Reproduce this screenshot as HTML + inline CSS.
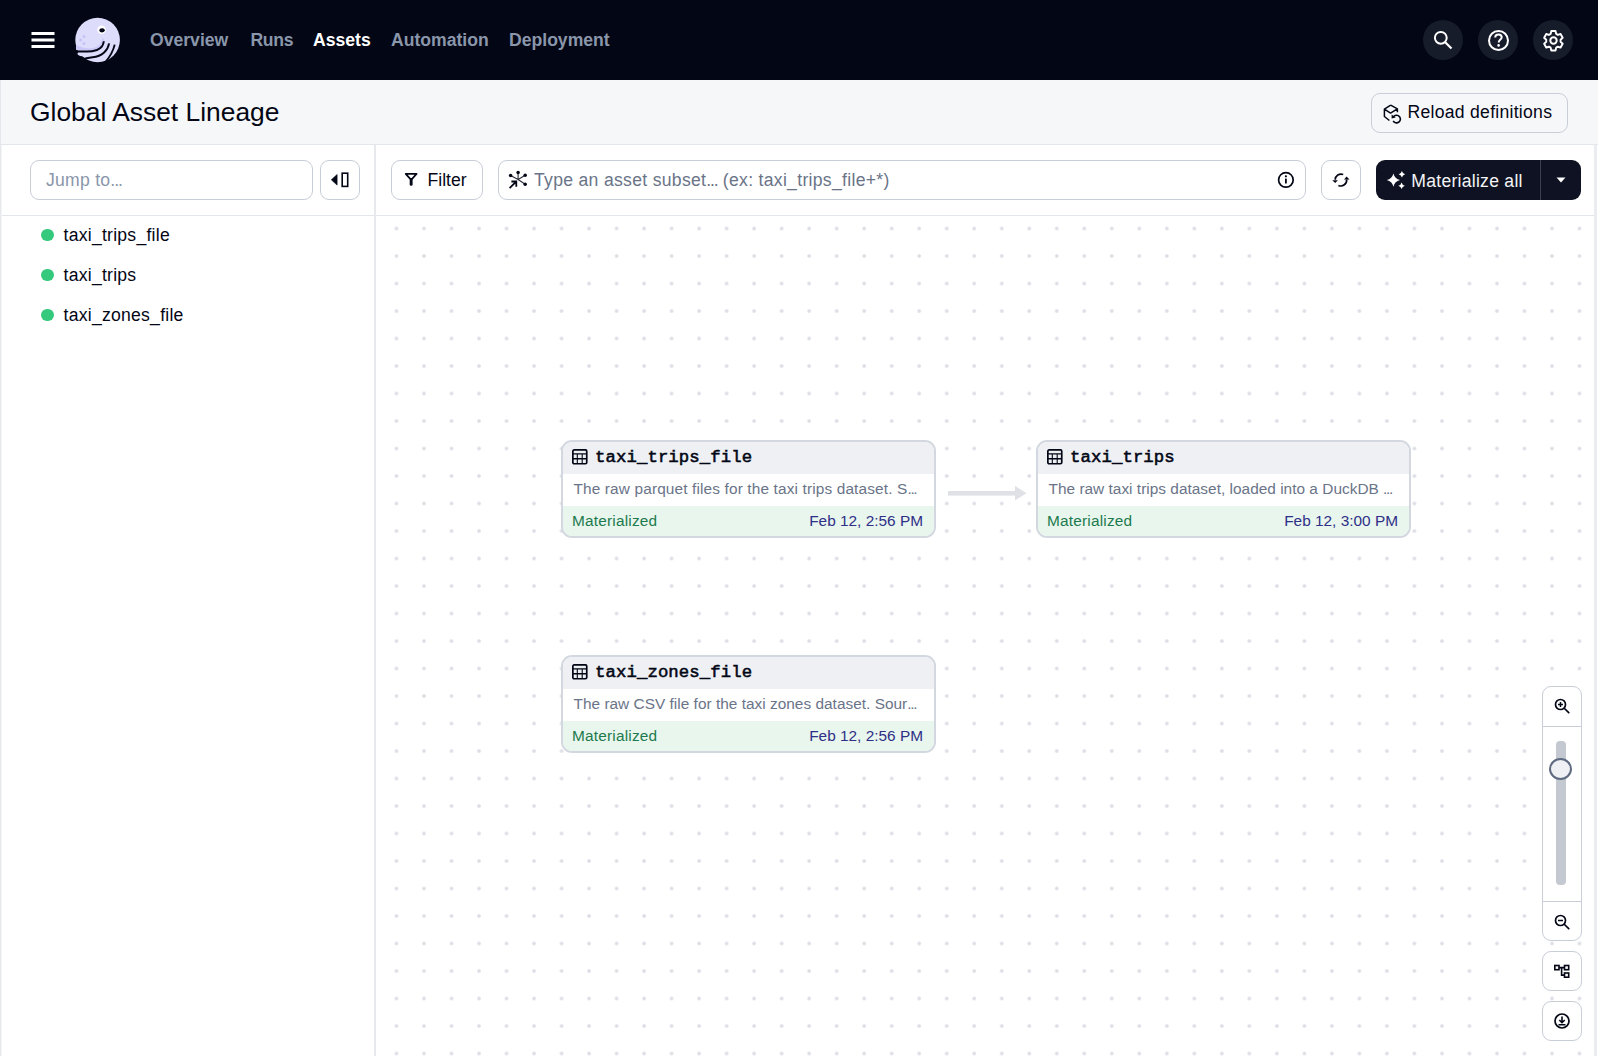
<!DOCTYPE html>
<html><head><meta charset="utf-8">
<style>
*{box-sizing:border-box;margin:0;padding:0}
html,body{width:1598px;height:1056px;overflow:hidden;background:#fff;font-family:"Liberation Sans",sans-serif;color:#030615}
.abs{position:absolute}
#nav{position:absolute;left:0;top:0;width:1598px;height:80px;background:#030615}
.navtxt{position:absolute;top:29px;font-size:17.6px;font-weight:700;color:#8a96aa;white-space:nowrap;line-height:22px}
.navbtn{position:absolute;top:20px;width:40px;height:40px;border-radius:20px;background:#171c2b}
#ph{position:absolute;left:0;top:80px;width:1598px;height:65px;background:#f6f7f9;border-bottom:1px solid #e3e6eb;border-left:1px solid #e3e6eb}
.btn{position:absolute;border:1px solid #c8cdd7;border-radius:9px;background:#fff}
.txt{position:absolute;white-space:nowrap}
#side{position:absolute;left:0;top:145px;width:376px;height:911px;border-right:2px solid #e8e9ed;border-left:1px solid #e6e8eb;background:#fff}
.node{position:absolute;width:375px;height:98px;border:2px solid #d3d7df;border-radius:11px;overflow:hidden;background:#fff}
.nh{position:absolute;left:0;top:0;right:0;height:32px;background:#eef0f3}
.nd{position:absolute;left:0;top:32px;right:0;height:32px;background:#fff}
.ns{position:absolute;left:0;top:64px;right:0;bottom:0;background:#e8f6ee}
.ntitle{position:absolute;left:32px;top:5px;letter-spacing:0.1px;font-family:"Liberation Mono",monospace;font-weight:400;-webkit-text-stroke:0.55px #030615;font-size:17.31px;line-height:22px;color:#030615;white-space:nowrap}
.ndesc{position:absolute;left:9.5px;top:5px;letter-spacing:0.14px;font-size:15.4px;line-height:20px;color:#6a7488;white-space:nowrap}
.nmat{position:absolute;left:9px;top:4.5px;letter-spacing:0.2px;font-size:15.4px;line-height:20px;color:#1d7a4d;white-space:nowrap}
.ndate{position:absolute;right:11px;top:4.5px;font-size:15.4px;line-height:20px;color:#2f2f87;white-space:nowrap}
.item{position:absolute;left:63.5px;font-size:17.6px;line-height:22px;color:#030615;white-space:nowrap;letter-spacing:0.25px}
.gdot{position:absolute;left:41.2px;width:12.6px;height:12.6px;border-radius:50%;background:#34c97d}
.zbtn{position:absolute;left:1542px;width:40px;height:40px;border:1px solid #c8cdd7;border-radius:9px;background:#fff}
.ell{letter-spacing:-1.1px}
.ell2{letter-spacing:-1.3px}
</style></head>
<body>
<!-- NAV -->
<div id="nav">
  <svg class="abs" style="left:31px;top:31px" width="24" height="18" viewBox="0 0 24 18">
    <rect x="0.5" y="1" width="23" height="3" fill="#fff"/>
    <rect x="0.5" y="7.5" width="23" height="3" fill="#fff"/>
    <rect x="0.5" y="14" width="23" height="3" fill="#fff"/>
  </svg>
  <svg class="abs" style="left:72px;top:15px" width="52" height="52" viewBox="0 0 52 52">
    <circle cx="25.6" cy="25" r="22.3" fill="#dedcfb"/>
    <path d="M30.5 22.5 C30 29, 26 32.8, 18.5 33.2 C12 33.4 7.5 32 4 29.5 L4 34.8 C8 37.2 13 37.6 19 37.5 C27 37.2 31.8 33 32.8 26 Z" fill="#ccc7f7"/>
    <path d="M10.5 39.6 Q8.5 39.5 7.2 38.6" stroke="#dedcfb" stroke-width="3.4" stroke-linecap="round" fill="none"/>
    <path d="M31.8 26.2 C31.4 31.5 27 35.8 20 36.2 C14 36.6 8 37 2.5 36" stroke="#030615" stroke-width="1.9" fill="none"/>
    <path d="M37.1 28.4 C36 35 30.5 41.6 20.5 42.2 C16 42.6 12 43.8 7.5 45.5" stroke="#030615" stroke-width="1.9" fill="none"/>
    <path d="M42.7 29.6 C41.2 36 38.5 41 33.5 47" stroke="#030615" stroke-width="1.9" fill="none"/>
    <circle cx="29.6" cy="14.8" r="4.3" fill="#fff"/>
    <ellipse cx="30.1" cy="15.3" rx="2.7" ry="2.1" fill="#030615"/>
    <circle cx="12" cy="21.5" r="1.5" fill="#c6c1f5"/>
    <circle cx="8.6" cy="25" r="1.5" fill="#c6c1f5"/>
    <circle cx="12" cy="28.6" r="1.5" fill="#c6c1f5"/>
  </svg>
  <div class="navtxt" style="left:150px">Overview</div>
  <div class="navtxt" style="left:250.5px;letter-spacing:-0.35px">Runs</div>
  <div class="navtxt" style="left:313px;color:#fff">Assets</div>
  <div class="navtxt" style="left:391px">Automation</div>
  <div class="navtxt" style="left:509px">Deployment</div>
  <div class="navbtn" style="left:1423px">
    <svg class="abs" style="left:0;top:0" width="40" height="40" viewBox="0 0 40 40">
      <circle cx="17.8" cy="17.8" r="5.9" stroke="#fff" stroke-width="2" fill="none"/>
      <path d="M22 22 L28.5 28.5" stroke="#fff" stroke-width="2.2"/>
    </svg>
  </div>
  <div class="navbtn" style="left:1478px">
    <svg class="abs" style="left:0;top:0" width="40" height="40" viewBox="0 0 40 40">
      <circle cx="20.5" cy="20.5" r="9.5" stroke="#fff" stroke-width="2" fill="none"/>
      <path d="M17.2 17.6 C17.2 15.6 18.6 14.4 20.5 14.4 C22.4 14.4 23.7 15.6 23.7 17.3 C23.7 19.6 20.9 19.6 20.7 22.5" stroke="#fff" stroke-width="2" fill="none"/>
      <circle cx="20.6" cy="25.4" r="1.3" fill="#fff"/>
    </svg>
  </div>
  <div class="navbtn" style="left:1533px">
    <svg class="abs" style="left:0;top:0" width="40" height="40" viewBox="0 0 40 40">
      <path transform="translate(20.6,0) scale(0.955,1) translate(-20,0)" d="M17.6 11 h4.4 l0.7 2.9 l1.8 1 l2.8 -0.9 l2.2 3.8 l-2.2 2 v2 l2.2 2 l-2.2 3.8 l-2.8 -0.9 l-1.8 1 l-0.7 2.9 h-4.4 l-0.7 -2.9 l-1.8 -1 l-2.8 0.9 l-2.2 -3.8 l2.2 -2 v-2 l-2.2 -2 l2.2 -3.8 l2.8 0.9 l1.8 -1 z" stroke="#fff" stroke-width="2" fill="none" stroke-linejoin="round"/>
      <circle cx="20.5" cy="20.5" r="3.2" stroke="#fff" stroke-width="2" fill="none"/>
    </svg>
  </div>
</div>

<!-- PAGE HEADER -->
<div id="ph">
  <div class="txt" style="left:29px;top:16px;font-size:26.4px;line-height:32px;color:#030615">Global Asset Lineage</div>
</div>
<div class="btn" style="left:1371px;top:93px;width:197px;height:40px;background:#f6f7f9">
  <svg class="abs" style="left:11px;top:10px" width="22" height="22" viewBox="0 0 22 22">
    <path d="M7.7 1.2 L14.4 4.8 V8.3 M7.7 1.2 L1.4 5.1 V12.5 L6.4 16.5 M1.4 5.1 L7.5 9.1 L14.4 4.8" stroke="#030615" stroke-width="1.5" fill="none" stroke-linejoin="round"/>
    <path d="M10.2 16.8 A3.8 3.8 0 1 0 10.9 12.4" stroke="#030615" stroke-width="1.6" fill="none"/>
    <path d="M8.6 10.6 L12.6 13.6 L8.6 14.6 Z" fill="#030615"/>
  </svg>
  <div class="txt" style="left:35.5px;top:7.3px;font-size:17.6px;line-height:22px;letter-spacing:0.27px;color:#030615">Reload definitions</div>
</div>

<!-- SIDEBAR -->
<div id="side">
  <div class="abs" style="left:0;top:70px;width:374px;height:1px;background:#e3e6eb"></div>
</div>
<div class="btn" style="left:30px;top:160px;width:283px;height:40px">
  <div class="txt" style="left:15px;top:8px;font-size:17.6px;line-height:22px;letter-spacing:0.25px;color:#8a96aa">Jump to<span class="ell">...</span></div>
</div>
<div class="btn" style="left:320px;top:160px;width:40px;height:40px">
  <svg class="abs" style="left:0;top:0" width="38" height="38" viewBox="0 0 38 38">
    <path d="M10.3 18.8 L16.1 13.5 V24.1 Z" fill="#030615" stroke="#030615" stroke-width="0.6" stroke-linejoin="round"/>
    <rect x="21.2" y="12.2" width="5.5" height="13.2" stroke="#030615" stroke-width="1.6" fill="none"/>
  </svg>
</div>
<div class="gdot" style="top:228.7px"></div>
<div class="item" style="top:224px">taxi_trips_file</div>
<div class="gdot" style="top:268.7px"></div>
<div class="item" style="top:264px">taxi_trips</div>
<div class="gdot" style="top:308.7px"></div>
<div class="item" style="top:304px">taxi_zones_file</div>

<!-- GRAPH AREA -->
<div class="abs" style="left:376px;top:145px;width:1218px;height:71px;border-bottom:1px solid #e3e6eb;background:#fff"></div>
<svg class="abs" style="left:376px;top:216px" width="1218" height="840">
  <defs>
    <pattern id="dots" x="-7.11" y="-15.11" width="27.512" height="27.5" patternUnits="userSpaceOnUse">
      <circle cx="27.6" cy="27.6" r="1.85" fill="#dcdee5"/>
      <circle cx="0.1" cy="0.1" r="1.85" fill="#dcdee5"/>
      <circle cx="27.6" cy="0.1" r="1.85" fill="#dcdee5"/>
      <circle cx="0.1" cy="27.6" r="1.85" fill="#dcdee5"/>
    </pattern>
  </defs>
  <rect x="0" y="0" width="1218" height="840" fill="url(#dots)"/>
  <!-- arrow -->
  <rect x="572" y="275" width="68" height="4.6" fill="#dfe1e6"/>
  <path d="M639 269.8 L650.5 277.3 L639 284.4 Z" fill="#dfe1e6"/>
</svg>
<div class="abs" style="left:1594px;top:145px;width:3px;height:911px;background:#eaecef"></div>

<!-- toolbar -->
<div class="btn" style="left:391px;top:160px;width:92px;height:40px">
  <svg class="abs" style="left:12px;top:11px" width="16" height="16" viewBox="0 0 16 16">
    <path d="M1.7 1.9 H12.6 L7.15 7.8 Z" stroke="#030615" stroke-width="1.7" fill="none" stroke-linejoin="round"/><path d="M7.15 8 V12.4" stroke="#030615" stroke-width="2.9" stroke-linecap="round"/>
  </svg>
  <div class="txt" style="left:35.5px;top:8px;font-size:17.6px;line-height:22px;color:#030615">Filter</div>
</div>
<div class="btn" style="left:498px;top:160px;width:808px;height:40px">
  <svg class="abs" style="left:5px;top:5px" width="28" height="28" viewBox="0 0 28 28">
    <path d="M14.1 13.5 V6.5 M14.1 13.5 L6.6 9.4 M14.1 13.5 L21.2 9.3 M14.1 13.5 L21.2 18.3" stroke="#030615" stroke-width="1.1" fill="none" opacity="0.85"/>
    <circle cx="14.1" cy="6.5" r="1.75" fill="#030615"/><circle cx="6.6" cy="9.4" r="1.75" fill="#030615"/><circle cx="21.2" cy="9.3" r="1.75" fill="#030615"/><circle cx="21.2" cy="18.3" r="1.75" fill="#030615"/>
    <path d="M5.6 22.1 L11.9 15.9 M7.4 15.5 H12.3 V20.7" stroke="#030615" stroke-width="1.8" fill="none"/>
  </svg>
  <div class="txt" style="left:35px;top:8px;font-size:17.6px;line-height:22px;letter-spacing:0.3px;color:#6a7488">Type an asset subset<span class="ell">...</span> (ex: taxi_trips_file+*)</div>
  <svg class="abs" style="left:778px;top:10px" width="18" height="18" viewBox="0 0 18 18">
    <circle cx="8.9" cy="8.9" r="7.3" stroke="#030615" stroke-width="1.7" fill="none"/>
    <rect x="8" y="7.4" width="1.8" height="5" rx="0.5" fill="#030615"/>
    <circle cx="8.9" cy="5.3" r="1.1" fill="#030615"/>
  </svg>
</div>
<div class="btn" style="left:1321px;top:160px;width:40px;height:40px">
  <svg class="abs" style="left:0;top:0" width="38" height="38" viewBox="0 0 38 38">
    <path d="M21.2 13.5 A5.8 5.8 0 0 0 13.2 18.8" stroke="#030615" stroke-width="1.7" fill="none"/>
    <path d="M16.4 24.4 A5.8 5.8 0 0 0 24.6 18.3" stroke="#030615" stroke-width="1.7" fill="none"/>
    <path d="M10.3 19.3 H15.9 L13.2 21.9 Z" fill="#030615"/>
    <path d="M22 18.5 H27.5 L24.6 15.6 Z" fill="#030615"/>
  </svg>
</div>
<div class="abs" style="left:1376px;top:160px;width:205px;height:40px;background:#0f1222;border-radius:9px">
  <svg class="abs" style="left:10px;top:10px" width="20" height="20" viewBox="0 0 20 20">
    <path d="M7.4 3.5 Q8.700000000000001 8.799999999999999 14.0 10.1 Q8.700000000000001 11.4 7.4 16.7 Q6.1000000000000005 11.4 0.8000000000000007 10.1 Q6.1000000000000005 8.799999999999999 7.4 3.5Z" fill="#fff"/>
    <path d="M15.9 1.0999999999999996 Q16.55 3.65 19.1 4.3 Q16.55 4.95 15.9 7.5 Q15.25 4.95 12.7 4.3 Q15.25 3.65 15.9 1.0999999999999996Z" fill="#fff"/>
    <path d="M15.6 12.5 Q16.25 15.15 18.9 15.8 Q16.25 16.45 15.6 19.1 Q14.95 16.45 12.3 15.8 Q14.95 15.15 15.6 12.5Z" fill="#fff"/>
  </svg>
  <div class="txt" style="left:35.3px;top:9.5px;font-size:17.6px;line-height:22px;letter-spacing:0.26px;color:#f3f4f6">Materialize all</div>
  <div class="abs" style="left:164px;top:0;width:1px;height:40px;background:#3a3e4e"></div>
  <svg class="abs" style="left:180px;top:17px" width="10" height="6" viewBox="0 0 10 6"><path d="M0.5 0.6 H9.5 L5 5.5Z" fill="#fff"/></svg>
</div>

<!-- NODES -->
<div class="node" style="left:561px;top:440px">
  <div class="nh">
    <svg class="abs" style="left:8.3px;top:6.4px" width="18" height="18" viewBox="0 0 18 18">
      <rect x="1.85" y="1.85" width="13.9" height="13.9" rx="1.3" stroke="#030615" stroke-width="1.7" fill="none"/>
      <path d="M1.5 5.9 H16 M1.5 10.8 H16" stroke="#030615" stroke-width="1.4"/>
      <path d="M6.3 5.9 V15 M11.2 5.9 V15" stroke="#030615" stroke-width="1.1"/>
    </svg>
    <div class="ntitle">taxi_trips_file</div>
  </div>
  <div class="nd"><div class="ndesc" style="left:10.5px">The raw parquet files for the taxi trips dataset. S<span class="ell2">...</span></div></div>
  <div class="ns"><div class="nmat">Materialized</div><div class="ndate">Feb 12, 2:56 PM</div></div>
</div>
<div class="node" style="left:1036px;top:440px">
  <div class="nh">
    <svg class="abs" style="left:8.3px;top:6.4px" width="18" height="18" viewBox="0 0 18 18">
      <rect x="1.85" y="1.85" width="13.9" height="13.9" rx="1.3" stroke="#030615" stroke-width="1.7" fill="none"/>
      <path d="M1.5 5.9 H16 M1.5 10.8 H16" stroke="#030615" stroke-width="1.4"/>
      <path d="M6.3 5.9 V15 M11.2 5.9 V15" stroke="#030615" stroke-width="1.1"/>
    </svg>
    <div class="ntitle">taxi_trips</div>
  </div>
  <div class="nd"><div class="ndesc" style="letter-spacing:0.02px;left:10.5px">The raw taxi trips dataset, loaded into a DuckDB <span class="ell2">...</span></div></div>
  <div class="ns"><div class="nmat">Materialized</div><div class="ndate">Feb 12, 3:00 PM</div></div>
</div>
<div class="node" style="left:561px;top:655px">
  <div class="nh">
    <svg class="abs" style="left:8.3px;top:6.4px" width="18" height="18" viewBox="0 0 18 18">
      <rect x="1.85" y="1.85" width="13.9" height="13.9" rx="1.3" stroke="#030615" stroke-width="1.7" fill="none"/>
      <path d="M1.5 5.9 H16 M1.5 10.8 H16" stroke="#030615" stroke-width="1.4"/>
      <path d="M6.3 5.9 V15 M11.2 5.9 V15" stroke="#030615" stroke-width="1.1"/>
    </svg>
    <div class="ntitle">taxi_zones_file</div>
  </div>
  <div class="nd"><div class="ndesc" style="letter-spacing:0.02px;left:10.5px">The raw CSV file for the taxi zones dataset. Sour<span class="ell2">...</span></div></div>
  <div class="ns"><div class="nmat">Materialized</div><div class="ndate">Feb 12, 2:56 PM</div></div>
</div>

<div class="abs" style="left:1px;top:145px;width:1px;height:911px;background:#f3f4f6"></div>
<!-- ZOOM CONTROLS -->
<div class="abs" style="left:1542px;top:686px;width:40px;height:255px;border:1px solid #c8cdd7;border-radius:9px;background:#fff">
  <div class="abs" style="left:0;top:39px;width:38px;height:1px;background:#c8cdd7"></div>
  <div class="abs" style="left:0;top:214px;width:38px;height:1px;background:#c8cdd7"></div>
  <svg class="abs" style="left:10px;top:10px" width="18" height="18" viewBox="0 0 18 18">
    <circle cx="7.5" cy="7.5" r="5" stroke="#030615" stroke-width="1.7" fill="none"/>
    <path d="M11 11 L16.2 16.2" stroke="#030615" stroke-width="1.7"/>
    <path d="M5 7.5 H10 M7.5 5 V10" stroke="#030615" stroke-width="1.5"/>
  </svg>
  <div class="abs" style="left:13px;top:54px;width:10px;height:144px;border-radius:4px;background:#c4c8d1"></div>
  <div class="abs" style="left:6px;top:71px;width:23px;height:22px;border-radius:50%;border:2px solid #5e6a80;background:#eef0f3"></div>
  <svg class="abs" style="left:10px;top:226px" width="18" height="18" viewBox="0 0 18 18">
    <circle cx="7.5" cy="7.5" r="5" stroke="#030615" stroke-width="1.7" fill="none"/>
    <path d="M11 11 L16.2 16.2" stroke="#030615" stroke-width="1.7"/>
    <path d="M5 7.5 H10" stroke="#030615" stroke-width="1.5"/>
  </svg>
</div>
<div class="zbtn" style="top:951px">
  <svg class="abs" style="left:10px;top:10px" width="18" height="18" viewBox="0 0 18 18">
    <rect x="1.8" y="3.5" width="4.2" height="4.2" stroke="#030615" stroke-width="1.6" fill="none"/>
    <rect x="11.5" y="3.5" width="4.2" height="4.2" stroke="#030615" stroke-width="1.6" fill="none"/>
    <rect x="11.5" y="11" width="4.2" height="4.2" stroke="#030615" stroke-width="1.6" fill="none"/>
    <path d="M6 5.6 H11.5 M8.6 5.6 V13.1 H11.5" stroke="#030615" stroke-width="1.6" fill="none"/>
  </svg>
</div>
<div class="zbtn" style="top:1001px">
  <svg class="abs" style="left:10px;top:10px" width="18" height="18" viewBox="0 0 18 18">
    <circle cx="9" cy="9" r="7" stroke="#030615" stroke-width="1.7" fill="none"/>
    <path d="M9 4.5 V10.5 M6.3 8 L9 10.7 L11.7 8 M5.5 12.8 H12.5" stroke="#030615" stroke-width="1.6" fill="none"/>
  </svg>
</div>
</body></html>
